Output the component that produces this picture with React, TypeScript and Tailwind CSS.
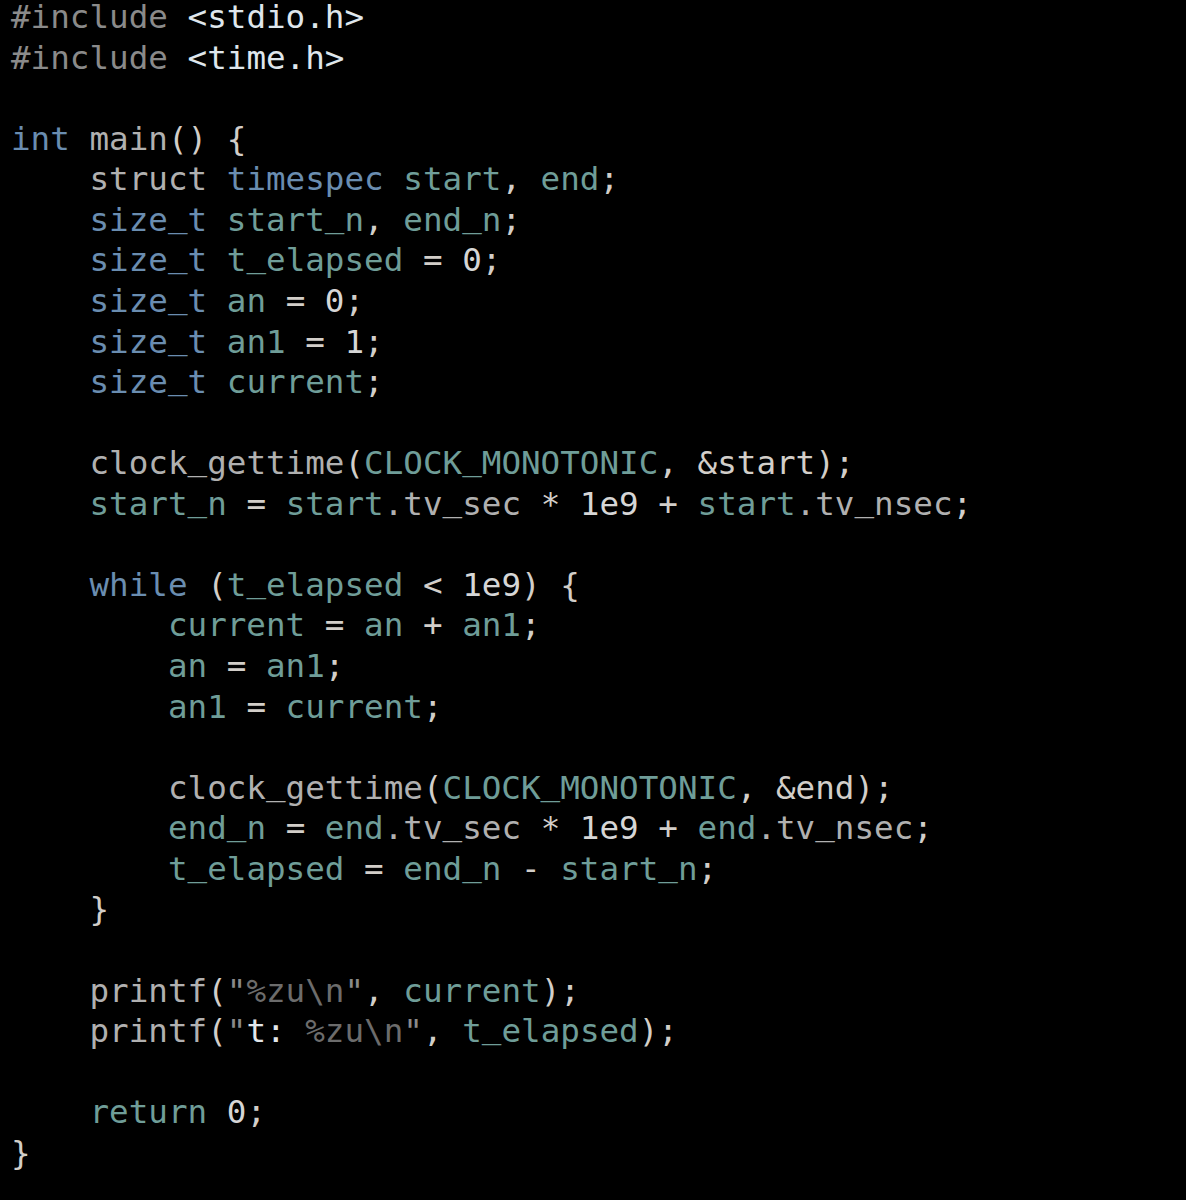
import React from 'react';

type Tok = [string, string];

// syntax colours
const pp = 'text-[#8a8a8a]';
const hd = 'text-[#dfe6ec]';
const kw = 'text-[#6a8db0]';
const id = 'text-[#6f9d98]';
const tx = 'text-[#b0b0b0]';
const pn = 'text-[#d2cec9]';
const nm = 'text-[#d6d6d6]';
const st = 'text-[#6c6c6c]';
const wt = 'text-[#e2e6ea]';

const lines: Tok[][] = [
  [['#include', pp], [' ', tx], ['<stdio.h>', hd]],
  [['#include', pp], [' ', tx], ['<time.h>', hd]],
  [],
  [['int', kw], [' main', tx], ['() {', pn]],
  [['    struct ', tx], ['timespec ', kw], ['start', id], [', ', pn], ['end', id], [';', pn]],
  [['    size_t ', kw], ['start_n', id], [', ', pn], ['end_n', id], [';', pn]],
  [['    size_t ', kw], ['t_elapsed', id], [' = ', pn], ['0', nm], [';', pn]],
  [['    size_t ', kw], ['an', id], [' = ', pn], ['0', nm], [';', pn]],
  [['    size_t ', kw], ['an1', id], [' = ', pn], ['1', nm], [';', pn]],
  [['    size_t ', kw], ['current', id], [';', pn]],
  [],
  [['    clock_gettime', tx], ['(', pn], ['CLOCK_MONOTONIC', id], [', &start);', pn]],
  [['    start_n', id], [' = ', pn], ['start', id], ['.tv_sec', tx], [' * ', pn], ['1e9', nm], [' + ', pn], ['start', id], ['.tv_nsec', tx], [';', pn]],
  [],
  [['    while', kw], [' (', pn], ['t_elapsed', id], [' < ', pn], ['1e9', nm], [') {', pn]],
  [['        current', id], [' = ', pn], ['an', id], [' + ', pn], ['an1', id], [';', pn]],
  [['        an', id], [' = ', pn], ['an1', id], [';', pn]],
  [['        an1', id], [' = ', pn], ['current', id], [';', pn]],
  [],
  [['        clock_gettime', tx], ['(', pn], ['CLOCK_MONOTONIC', id], [', &end);', pn]],
  [['        end_n', id], [' = ', pn], ['end', id], ['.tv_sec', tx], [' * ', pn], ['1e9', nm], [' + ', pn], ['end', id], ['.tv_nsec', tx], [';', pn]],
  [['        t_elapsed', id], [' = ', pn], ['end_n', id], [' - ', pn], ['start_n', id], [';', pn]],
  [['    }', pn]],
  [],
  [['    printf', tx], ['(', pn], ['"', pp], ['%zu\\n', st], ['"', pp], [', ', pn], ['current', id], [');', pn]],
  [['    printf', tx], ['(', pn], ['"', pp], ['t: ', wt], ['%zu\\n', st], ['"', pp], [', ', pn], ['t_elapsed', id], [');', pn]],
  [],
  [['    return', id], [' ', pn], ['0', nm], [';', pn]],
  [['}', pn]],
];

// underscores sit a little higher in the original font
function Word({ text }: { text: string }) {
  const parts = text.split('_');
  return (
    <>
      {parts.map((p, k) => (
        <React.Fragment key={k}>
          {k > 0 && <span className="relative top-[-4px]">_</span>}
          {p}
        </React.Fragment>
      ))}
    </>
  );
}

export default function App() {
  return (
    <div className="w-[1186px] h-[1200px] bg-black overflow-hidden">
      <div className="pl-[11px] font-['DejaVu_Sans_Mono',monospace] text-[32.6px] leading-[34.5px]">
        {lines.map((line, i) => (
          <div key={i} className="whitespace-pre h-[40.57px]">
            {line.map(([t, c], j) => (
              <span key={j} className={c}>
                <Word text={t} />
              </span>
            ))}
          </div>
        ))}
      </div>
    </div>
  );
}
